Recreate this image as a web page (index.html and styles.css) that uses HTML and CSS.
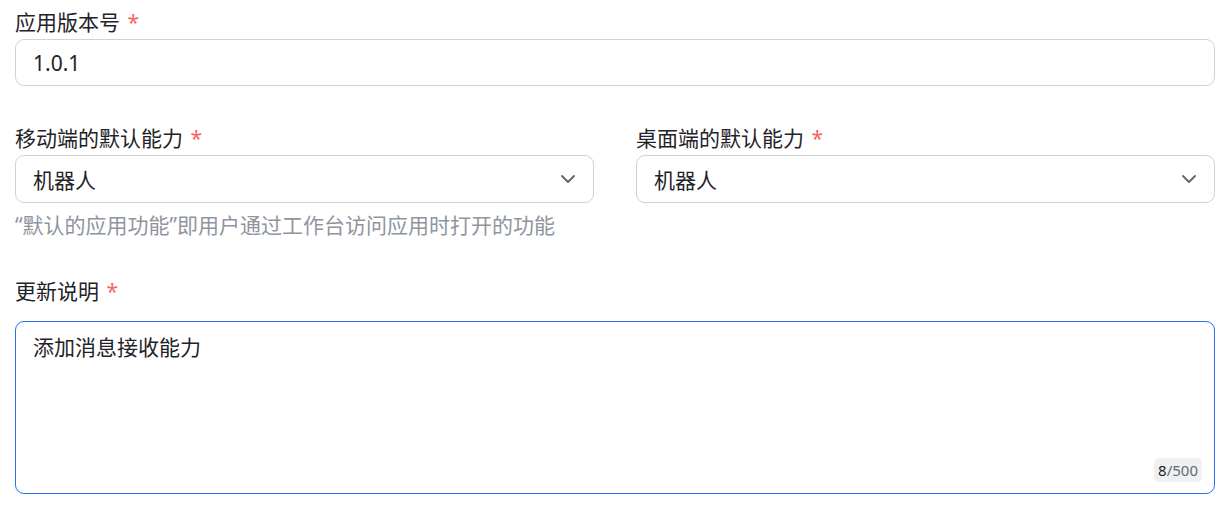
FILE: index.html
```html
<!DOCTYPE html>
<html lang="zh-CN">
<head>
    <meta charset="UTF-8">
    <title>版本信息</title>
    <link rel="stylesheet" href="styles.css">
</head>
<body>
    <form class="form">
        <div class="field">
            <label class="label">应用版本号 <span class="req">*</span></label>
            <div class="control">1.0.1</div>
        </div>

        <div class="row">
            <div class="field">
                <label class="label">移动端的默认能力 <span class="req">*</span></label>
                <div class="control select">
                    <span>机器人</span>
                    <svg class="chevron" width="16" height="10" viewBox="0 0 16 10"><path d="M2 2l6 6 6-6" fill="none" stroke="#646a73" stroke-width="2" stroke-linecap="round" stroke-linejoin="round"/></svg>
                </div>
            </div>
            <div class="field">
                <label class="label">桌面端的默认能力 <span class="req">*</span></label>
                <div class="control select">
                    <span>机器人</span>
                    <svg class="chevron" width="16" height="10" viewBox="0 0 16 10"><path d="M2 2l6 6 6-6" fill="none" stroke="#646a73" stroke-width="2" stroke-linecap="round" stroke-linejoin="round"/></svg>
                </div>
            </div>
        </div>
        <p class="hint">“默认的应用功能”即用户通过工作台访问应用时打开的功能</p>

        <div class="field notes">
            <label class="label">更新说明 <span class="req">*</span></label>
            <div class="textarea">
                <div class="text">添加消息接收能力</div>
                <span class="count"><b>8</b>/500</span>
            </div>
        </div>
    </form>
</body>
</html>
```

FILE: styles.css
```css
body {
    margin: 0;
    background: #fff;
    font-family: "Noto Sans", "Noto Sans CJK SC", sans-serif;
    color: #1f2329;
}
.form {
    width: 1200px;
    padding: 6px 15px 0;
}
.label {
    display: block;
    font-size: 21px;
    line-height: 33px;
    color: #1f2329;
}
.req {
    color: #f76560;
    margin-left: 2px;
}
.control {
    box-sizing: border-box;
    height: 47px;
    border: 1px solid #d0d3d6;
    border-radius: 9px;
    padding: 0 17px;
    font-size: 21px;
    display: flex;
    align-items: center;
}
.row {
    margin-top: 36px;
    display: grid;
    grid-template-columns: 1fr 1fr;
    gap: 42px;
}
.select {
    height: 48px;
    justify-content: space-between;
}
.hint {
    margin: 6px 0 0;
    font-size: 21px;
    line-height: 33px;
    color: #8f959e;
}
.field.notes {
    margin-top: 33px;
}
.textarea {
    position: relative;
    box-sizing: border-box;
    height: 173px;
    margin-top: 13px;
    border: 1px solid #2b6cf5;
    border-radius: 9px;
    padding: 9px 17px;
}
.text {
    font-size: 21px;
    line-height: 33px;
}
.count {
    position: absolute;
    right: 12px;
    bottom: 11px;
    background: #eff0f1;
    border-radius: 5px;
    padding: 0 4px;
    font-size: 15px;
    line-height: 24px;
    color: #646a73;
}
.count b {
    font-weight: normal;
    color: #1f2329;
}
```
